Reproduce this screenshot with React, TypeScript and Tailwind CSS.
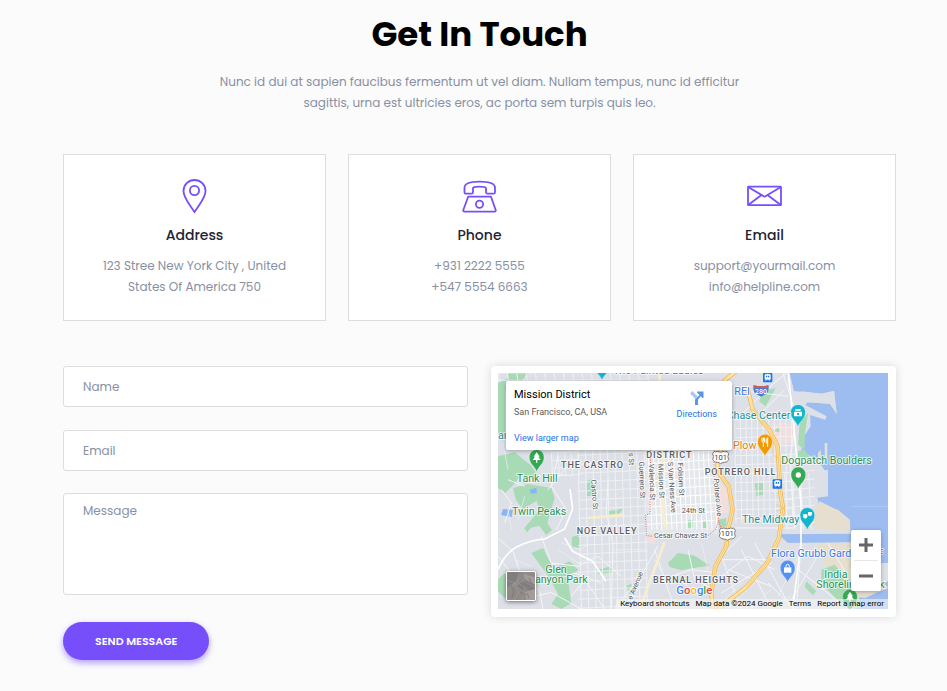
import type { ReactNode } from "react";

const contacts: { title: string; lines: string[]; icon: ReactNode }[] = [
  {
    title: "Address",
    lines: ["123 Stree New York City , United", "States Of America 750"],
    icon: (
      <>
        <path d="M17.500 34.200C14.500 28.500 6.500 20.500 6.500 13a11 11 0 0 1 22 0c0 7.500-8 15.500-11 21.200Z" />
        <circle cx="17.500" cy="12.500" r="4.600" />
      </>
    ),
  },
  {
    title: "Phone",
    lines: ["+931 2222 5555", "+547 5554 6663"],
    icon: (
      <>
        <path d="M2.500 12.500V9.700C2.500 5.500 9 3.700 17.500 3.700s15.500 1.800 15.500 6v4.500c0 1-.6 1.500-1.500 1.500h-6c-1 0-1.500-.6-1.500-1.500v-4c0-1-2-1.500-6.500-1.500s-6.500.5-6.500 1.500v4c0 1-.6 1.500-1.500 1.500H4c-1 0-1.500-.6-1.500-1.500Z" />
        <path d="M6.200 18.700h22.800l4.700 13.300c.3 1-.2 1.600-1.200 1.600H2.500c-1 0-1.500-.6-1.200-1.600Z" />
        <circle cx="17.500" cy="26.200" r="3.600" />
      </>
    ),
  },
  {
    title: "Email",
    lines: ["support@yourmail.com", "info@helpline.com"],
    icon: (
      <>
        <rect x="1" y="8.700" width="33" height="18.500" rx=".5" />
        <path d="M1.500 9.200 17.500 18.700 33.500 9.200M1.500 26.700l13-9.700M33.500 26.700l-13-9.700" />
      </>
    ),
  },
];

const green = "#a8dab5";
const beige = "#e6dfd0";

function Pin({ x, y, color, children }: { x: number; y: number; color: string; children?: ReactNode }) {
  return (
    <g transform={`translate(${x} ${y})`}>
      <path
        d="M0 36C-4 20-22 14-22-8a22 22 0 0 1 44 0C22 14 4 20 0 36Z"
        fill={color}
        stroke="#fff"
        strokeOpacity=".5"
        strokeWidth="1.500"
      />
      {children}
    </g>
  );
}

const tree = <path d="M0-23-9-9h4l-7 10H-2v8h4V1h10L5-9h4Z" fill="#fff" />;

function Shield({ x, y }: { x: number; y: number }) {
  return (
    <g>
      <path
        d={`M${x - 19} ${y - 17}q4 3 8 0 11 5 22 0 4 3 8 0l5 7q-5 9 0 18-4 9-14 8-7 1-10 4-3-3-10-4-10 1-14-8 5-9 0-18Z`}
        fill="#fff"
        stroke="#666"
        strokeWidth="2.500"
      />
      <text x={x} y={y + 8} textAnchor="middle" fontSize="23" fill="#444">
        101
      </text>
    </g>
  );
}

function Transit({ x, y }: { x: number; y: number }) {
  return (
    <g transform={`translate(${x} ${y})`}>
      <rect x="-14" y="-14" width="28" height="28" rx="3" fill="#1a73e8" />
      <path d="M-8-9q8-3 16 0V5H-8ZM-6 10l3-5M6 10 3 5" fill="#fff" stroke="#fff" strokeWidth="2" />
      <path d="M-5-6h4v5h-4ZM1-6h4v5H1Z" fill="#1a73e8" />
    </g>
  );
}

function lines(x0: number, y0: number, x1: number, y1: number, dx: number, dy: number, slant: number) {
  let d = "";
  for (let x = x0; x <= x1; x += dx) d += `M${x} ${y0}L${x + slant} ${y1}`;
  for (let y = y0; y <= y1; y += dy) d += `M${x0} ${y}L${x1} ${y - slant}`;
  return d;
}

const streets =
  lines(270, 250, 480, 738, 22, 27, 10) +
  lines(740, 170, 920, 480, 17, 27, 4) +
  lines(190, 270, 270, 340, 20, 23, 4) +
  lines(890, 330, 980, 500, 24, 26, 8) +
  lines(30, 30, 480, 56, 28, 22, 4);

const missionStreets = lines(480, 250, 680, 500, 15, 26, 12);

const halo = "[paint-order:stroke] stroke-white/80 stroke-[5px]";

function MapDrawing() {
  return (
    <svg
      viewBox="30 30 1170 708"
      preserveAspectRatio="xMidYMid slice"
      className="block h-full w-full"
      fontFamily='Roboto, "Liberation Sans", sans-serif'
      role="img"
      aria-label="Map of the Mission District, San Francisco"
    >
      <rect x="30" y="30" width="1170" height="708" fill="#dde1e7" />
      <path d="M470 262h220v250H478Z" fill="#e4e7eb" />

      {/* bay and shoreline */}
      <path
        d="M905 30 918 84 1000 92 1038 84 1046 152 1026 122 958 118 952 126 1016 160 1012 170 966 156 968 190 945 225 940 264 988 290 1010 322 1020 320V400L988 404 995 434 1050 440 1085 470 1088 512 870 514 900 540 1088 538 1140 600 1200 600V30Z"
        fill="#9dbdf1"
      />
      <path d="M946 124 940 85 1000 92 1038 84 1046 152 1026 122 958 118Z" fill="#dde1e7" />
      <path d="M1100 738 1120 690 1200 655V738Z" fill="#9dbdf1" />
      <path d="m995 415 57 28 33 27v34l-90-4-35-22Z" fill={beige} />
      <path d="M985 540h105l50 60 60 75-70 30-60-10-50-65Z" fill={beige} />
      <path d="M870 514h220v12l-100-4-85 6Z" fill="#9dbdf1" />
      <path d="M1010 240h8v62h-8ZM990 270l8-10 2 40-10-5Z" fill="#dce1dd" />

      {/* clinics */}
      <path d="m830 190 60-10 30 10v50h-68ZM690 350l30 35v65l-22 2ZM475 520h28v22h-20Z" fill="#f3dede" />

      {/* parks */}
      <g fill={green}>
        <path d="M30 60 60 45 52 90v130l-22-10ZM30 280l50-12 50 40 22 35-55-8-15 25-30 30-22-15Z" />
        <path d="m75 375 45-12 70 12 10 30-22 75 14 22-18 14-20-28-25 6-12 14-8-12 45-55-8-28-42 26-20-28Z" />
        <path d="m130 570 35-15 30 60 50-20 25 25-30 30 10 70-30 18-30-15 20-30-30-55Z" />
        <path d="M30 650q30-40 50 0v40l-30 15-20-20ZM252 522l24-8v40h-25ZM60 30h60l-20 24H60Z" />
        <path d="m540 600 30-30 50 8 45 30-55 8-30 6-35-10Z" />
        <path d="m298 352 22-3v50h-24ZM800 360h25v35l-20 5ZM828 85l35-10-30 55-20-15ZM690 470l25-5v25l-20 5Z" />
        <path d="m935 180 25-30-10 70 0 40-20-15ZM855 205l20-15v18ZM600 472h14v22h-14ZM645 475h12v20h-12ZM360 445l45-8-10 15-35 5Z" />
        <path d="M415 668l22-8 8 25-20 8ZM330 620l40-10 5 18-45 6ZM860 455l18 5-2 22-15-5ZM955 655l30 30-10 12-25-25Z" />
        <path d="m930 265 20-5 15 22-35 5ZM1000 620l40-15 50 60 30 70h-50l-70-75Z" />
      </g>
      <path d="m45 438 30 2-4 22-32-6ZM125 380l20-6 2 16-18 2Z" fill="#8ab4f8" />

      {/* streets */}
      <path d={streets} stroke="#eff1f4" strokeWidth="3" fill="none" />
      <path d={missionStreets} stroke="#fff" strokeWidth="3" fill="none" />
      <g fill="none" stroke="#f4f6f8" strokeWidth="3" strokeLinejoin="round">
        <path d="M30 525l45 40 20 60 60 60 10 53M160 520l30 80 80 10 60-30 70 60M380 738l80-100 50-90" />
        <path d="M360 350l-5 100 20 90-5 198M210 280l-20 90 45 70-30 60M740 60l-90 70M760 520l-60 60 60 158M700 640l80-60 80 40M600 560l20 90 60 30M500 560l60 178M520 650l90-30 80 10" />
        <path d="M690 590h150M720 620l130 50M760 560l90 178M800 540l110 198M840 660l80 78M700 690l150-90M940 540l-15 198M880 580l200 158M1000 560l-90 150M1020 540l60 100" />
        <path d="M30 580l40 50M50 480l20-60-30-40M60 350l50 20M180 380l50-60M180 660l80-30 80 30M250 700l40-50 60 88M280 738l-90-50-80 20" />
        <path d="M740 495h180l-15-200 20-140-40-125M740 80l160 20M745 170l90-90 60-50M830 140l60-60" />
      </g>
      <g fill="none" stroke="#eff1f4" strokeWidth="2">
        <path d="m220 540 60 20 20-20M210 560l60 40 50-20M380 560h100M500 590l30 50M640 540l20 80M560 640l80 60M700 720l60-60M720 738l80-80M790 738l60-60M850 738l60-40M870 700l60-120M60 440l10 60M90 470l20-70M200 330l50 10M45 240l15 80M190 640l60 20M130 610l-50-20M130 640l-40 70" />
      </g>
      <path
        d="M30 620q20-50 60-70t80-22l60-30 24-60-8-60M230 525l24 40 60 30 40 60M939 540V420l-18-190-20-200M939 540l-25 198"
        fill="none"
        stroke="#fff"
        strokeWidth="5"
      />
      <path d="M525 262v190l10 50M300 465l110-10M515 30v25M455 738l75-200" fill="none" stroke="#f8eecb" strokeWidth="8" />
      <path d="M1088 430h112" stroke="#b4cdf3" strokeWidth="2" />
      <path
        d="m488 262-2 190-14 4 3 62 20 2M678 262v100l14 110-8 26-24 20M692 476l8 22"
        fill="none"
        stroke="#ee675c"
        strokeWidth="3"
        strokeDasharray="3 4"
      />

      {/* freeways */}
      <g fill="none" strokeLinejoin="round" strokeLinecap="round">
        <g stroke="#f2b24a" strokeWidth="13">
          <path d="M750 20 710 52M700 250l-14 70 36 50 12 70-14 60-5 50-33 60-12 80 6 60" />
          <path d="m780 80 14 60 50 60 25 50 8 140 8 45-12 90-36 75-60 70-95 75" />
        </g>
        <g stroke="#fbe3a2" strokeWidth="9">
          <path d="M750 20 710 52M700 250l-14 70 36 50 12 70-14 60-5 50-33 60-12 80 6 60" />
          <path d="m780 80 14 60 50 60 25 50 8 140 8 45-12 90-36 75-60 70-95 75" />
        </g>
        <g stroke="#f4bd5f" strokeWidth="2">
          <path d="m686 320 36 50 12 70-14 60-5 50-33 60-12 80M794 140l50 60 25 50 8 140 8 45-12 90-36 75-60 70" />
          <path d="m865 425 25 10-22 8M855 245v30l15 10" />
        </g>
      </g>

      {/* street names */}
      <g fontSize="22" fill="#555" className={halo}>
        <text transform="translate(309 350) rotate(86)">Castro St</text>
        <text transform="translate(453 296) rotate(88)">Guerrero St</text>
        <text transform="translate(483 303) rotate(88)">Valencia St</text>
        <text transform="translate(511 303) rotate(88)">Mission St</text>
        <text transform="translate(539 297) rotate(86)">S Van Ness Ave</text>
        <text transform="translate(569 300) rotate(87)">Folsom St</text>
        <text transform="translate(677 347) rotate(85)">Potrero Ave</text>
        <text transform="translate(422 270) rotate(88)">s St</text>
        <text transform="translate(432 712) rotate(-68)">e Avenue</text>
        <text x="581" y="450">24th St</text>
        <text x="498" y="526">Cesar Chavez St</text>
      </g>

      {/* districts */}
      <g fontSize="27" fontWeight="500" fill="#5b6066" className={`${halo} tracking-widest`}>
        <text x="219" y="316">THE CASTRO</text>
        <text x="475" y="284">DISTRICT</text>
        <text x="650" y="335">POTRERO HILL</text>
        <text x="266" y="513">NOE VALLEY</text>
        <text x="495" y="660">BERNAL HEIGHTS</text>
      </g>

      {/* places */}
      <Pin x={146} y={290} color="#34a853">{tree}</Pin>
      <Pin x={930} y={155} color="#12b5cb">
        <path d="M-12-9h24V5h-24ZM-8-17H8v5H-8Z" fill="#fff" />
        <path d="M-3-5h6V1h-6Z" fill="#12b5cb" />
      </Pin>
      <Pin x={831} y={244} color="#f29900">
        <path d="M-9-20v10q0 4 4 4V8M-5-20v11M-1-20v10q0 4-4 4M8 8v-28q-6 5-5 16h5" fill="none" stroke="#fff" strokeWidth="3" />
      </Pin>
      <Pin x={931} y={342} color="#34a853"><circle cy="-6" r="8" fill="#fff" /></Pin>
      <Pin x={958} y={464} color="#12b5cb">
        <path d="M-13-10H0v8q-6 10-13 0ZM2-17h12v8Q9-2 2-7Z" fill="#fff" />
      </Pin>
      <Pin x={899} y={622} color="#5491f5">
        <path d="M-11-9h22V7h-22Z" fill="#fff" />
        <path d="M-5-9v-3q0-6 5-6t5 6v3" fill="none" stroke="#fff" strokeWidth="3" />
      </Pin>
      <Pin x={1086} y={709} color="#34a853">{tree}</Pin>
      <Pin x={342} y={16} color="#12b5cb" />
      <Transit x={839} y={44} />
      <Transit x={868} y={363} />
      <Shield x={698} y={282} />
      <Shield x={718} y={512} />
      <path d="M797 67q22 6 44 0 4 20-9 27l-13 7-13-7q-13-7-9-27Z" fill="#4a79d8" />
      <path d="M797 67q22 6 44 0v8h-44Z" fill="#d8584f" />
      <text x="819" y="93" textAnchor="middle" fontSize="21" fontWeight="500" fill="#fff">280</text>

      <g fontSize="32" className={halo}>
        <g fill="#2a9152">
          <text x="86" y="357">Tank Hill</text>
          <text x="72" y="455">Twin Peaks</text>
          <text x="172" y="629">Glen</text>
          <text x="120" y="660">Canyon Park</text>
          <text x="880" y="303">Dogpatch Boulders</text>
          <text x="1009" y="644">India Basin</text>
          <text x="985" y="676">Shoreline Park</text>
        </g>
        <g fill="#15909f">
          <text x="716" y="169">Chase Center</text>
          <text x="762" y="480">The Midway</text>
          <text x="375" y="33">The Painted Ladies</text>
          <text x="30" y="228">an</text>
        </g>
        <g fill="#3b78e7">
          <text x="739" y="95">REI</text>
          <text x="849" y="583">Flora Grubb Gardens SF</text>
        </g>
        <text x="735" y="259" fill="#e0820f">Plow</text>
      </g>
      <text x="565" y="692" fontSize="34" fontWeight="500" className="[paint-order:stroke] stroke-white stroke-[4px]">
        <tspan fill="#4285f4">G</tspan>
        <tspan fill="#ea4335">o</tspan>
        <tspan fill="#fbbc04">o</tspan>
        <tspan fill="#4285f4">g</tspan>
        <tspan fill="#34a853">l</tspan>
        <tspan fill="#ea4335">e</tspan>
      </text>
    </svg>
  );
}

function SatelliteThumb() {
  return (
    <svg viewBox="0 0 28 28" className="block h-full w-full" aria-hidden="true">
      <rect width="28" height="28" fill="#8f8988" />
      <path d="M0 0h14l-6 10-8 5ZM10 14l8-6 10 4v8l-12-2Z" fill="#817e7f" />
      <path d="m16 2 12 3v8l-9-5ZM18 20l10-3v11h-9Z" fill="#a39b97" />
      <path d="m0 20 8-9 4 10-5 7M12 0l-2 10 8 6-3 12M20 0l-4 9 12 6M0 8l10 4M18 16l10 8" fill="none" stroke="#a59d99" strokeWidth=".6" />
      <path d="m4 14 3 5-2 7M13 20l6 3M22 6l3 6M20 21l2 5" fill="none" stroke="#787373" strokeWidth=".8" />
    </svg>
  );
}

const field =
  "block w-full rounded-[3px] border border-[#dddddd] bg-white px-[19px] text-xs text-[#8890a3] placeholder:text-[#8890a3] placeholder:opacity-100 focus:border-[#764ffb] focus:outline-none";

export default function App() {
  return (
    <main className='min-h-screen bg-[#fbfbfb] pt-3 pr-[51px] pb-7 pl-[63px] font-[Poppins,Inter,"Open_Sans",sans-serif] text-xs leading-[21px] text-[#8890a3]'>
      <header className="mx-auto max-w-[560px] text-center">
        <h1 className="text-[34px] leading-[44px] font-bold text-black">Get In Touch</h1>
        <p className="mt-[15px]">
          Nunc id dui at sapien faucibus fermentum ut vel diam. Nullam tempus, nunc id efficitur sagittis, urna est
          ultricies eros, ac porta sem turpis quis leo.
        </p>
      </header>

      <section className="mt-[41px] grid grid-cols-3 gap-[22px]">
        {contacts.map((c) => (
          <article
            key={c.title}
            className="flex flex-col items-center border border-[#dddddd] bg-white px-8 pt-[23px] pb-[23px] text-center"
          >
            <svg
              viewBox="0 0 36 36"
              className="size-9"
              fill="none"
              stroke="#764ffb"
              strokeWidth="1.800"
              strokeLinejoin="round"
              aria-hidden="true"
            >
              {c.icon}
            </svg>
            <h2 className="mt-[11px] text-sm leading-[20px] font-medium text-[#232233]">{c.title}</h2>
            <p className="mt-[10px]">
              {c.lines.map((l) => (
                <span key={l} className="block whitespace-nowrap">
                  {l}
                </span>
              ))}
            </p>
          </article>
        ))}
      </section>

      <section className="mt-[45px] grid grid-cols-2 items-start gap-[23px]">
        <form className="flex flex-col" onSubmit={(e) => e.preventDefault()}>
          <input type="text" aria-label="Name" placeholder="Name" className={`${field} h-[41px]`} />
          <input type="email" aria-label="Email" placeholder="Email" className={`${field} mt-[23px] h-[41px]`} />
          <textarea
            aria-label="Message"
            placeholder="Message"
            className={`${field} mt-[22px] h-[102px] resize-none py-[9px]`}
          />
          <button
            type="submit"
            className="mt-[27px] h-[38px] self-start rounded-full bg-[#764ffb] px-8 text-[11px] font-semibold text-white shadow-[0_3px_6px_rgba(118,79,251,0.55)]"
          >
            SEND MESSAGE
          </button>
        </form>

        <div className="rounded bg-white pt-[7px] pr-2 pb-2 pl-[7px] shadow-[0_0_10px_rgba(0,0,0,0.14)]">
          <div className='relative h-[236px] overflow-hidden font-[Roboto,"Liberation_Sans",sans-serif]'>
            <MapDrawing />

            <div className="absolute top-2 left-2 flex h-[69px] w-[226px] justify-between rounded-[2px] bg-white pt-[6px] pr-[15px] pl-2 shadow-[0_1px_4px_rgba(0,0,0,0.3)]">
              <div>
                <h3 className="text-[11px] leading-[15px] font-normal text-black">Mission District</h3>
                <p className="mt-1 text-[9px] leading-[12px] text-[#5b5b5b]">San Francisco, CA, USA</p>
                <a href="#map" className="mt-[13px] block text-[9px] leading-[14px] text-[#1a73e8]">
                  View larger map
                </a>
              </div>
              <a href="#directions" className="flex flex-col items-center pt-1 text-[9px] text-[#1a73e8]">
                <svg viewBox="0 0 14 14" className="size-[14px]" aria-hidden="true">
                  <path d="M0 2.500 2.500 0 7.500 5.500 5.500 8Z" fill="#a8c7f5" />
                  <path d="M5 14V8.500L9.500 4 7 1.500V.5H13.500V7h-1L10.800 5.300 8 8.500V14Z" fill="#5b95e8" />
                </svg>
                <span className="leading-[18px]">Directions</span>
              </a>
            </div>

            <button
              type="button"
              aria-label="Show satellite imagery"
              className="absolute bottom-2 left-2 size-[30px] overflow-hidden rounded-[2px] border border-white shadow-[0_1px_4px_rgba(0,0,0,0.5)]"
            >
              <SatelliteThumb />
            </button>

            <div className="absolute right-[7px] bottom-[18px] flex w-[30px] flex-col rounded-[2px] bg-white shadow-[0_1px_4px_rgba(0,0,0,0.3)]">
              <button type="button" aria-label="Zoom in" className="flex h-[30px] items-center justify-center">
                <svg viewBox="0 0 14 14" className="size-[14px]" aria-hidden="true">
                  <path d="M7 0v14M0 7h14" stroke="#666" strokeWidth="3" />
                </svg>
              </button>
              <div className="mx-[3px] h-px bg-[#e6e6e6]" />
              <button type="button" aria-label="Zoom out" className="flex h-[30px] items-center justify-center">
                <svg viewBox="0 0 14 14" className="size-[14px]" aria-hidden="true">
                  <path d="M0 7h14" stroke="#666" strokeWidth="3" />
                </svg>
              </button>
            </div>

            <div className="absolute right-0 bottom-0 flex gap-[6px] bg-[#f5f5f5]/60 pr-1 pl-1 text-[8px] leading-[10px] whitespace-nowrap text-black">
              <button type="button">Keyboard shortcuts</button>
              <span>Map data ©2024 Google</span>
              <a href="#terms">Terms</a>
              <a href="#report">Report a map error</a>
            </div>
          </div>
        </div>
      </section>
    </main>
  );
}
